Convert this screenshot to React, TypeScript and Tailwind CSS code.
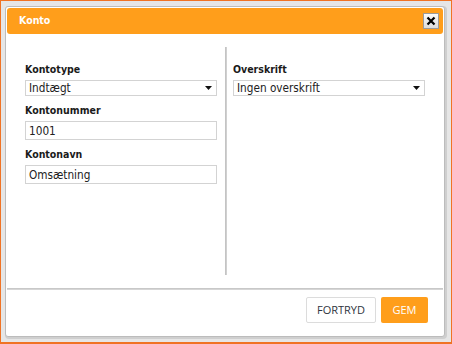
import React from "react";

const font = { fontFamily: '"DejaVu Sans Condensed", "DejaVu Sans", Verdana, sans-serif', fontStretch: "condensed" } as React.CSSProperties;

function Label({ children }: { children: React.ReactNode }) {
  return <div className="h-[12px] leading-[12px] text-[10.5px] font-bold text-[#1a1a1a]">{children}</div>;
}

function Select({ value }: { value: string }) {
  return (
    <div className="mt-[5px] h-[16px] w-[192px] border border-[#d3d3d3] bg-white flex items-center pl-[3px] pr-[4px] text-[11.7px] text-[#222]">
      <span className="flex-1 leading-[14px]">{value}</span>
      <svg width="7" height="4" viewBox="0 0 7 4"><path d="M0 0H7L3.5 4Z" fill="#111" /></svg>
    </div>
  );
}

function Input({ value }: { value: string }) {
  return (
    <div className="mt-[5px] h-[19px] w-[192px] border border-[#d3d3d3] bg-white flex items-center pl-[3px] text-[11.7px] text-[#222]">
      <span className="leading-[14px]">{value}</span>
    </div>
  );
}

export default function App() {
  return (
    <div className="w-[452px] h-[344px] bg-[#e6e6e6] border-[#f07324] border-t border-x border-b-2 pl-[4px] pt-[5px]" style={font}>
      <div className="w-[440px] h-[331px] border border-[#bcbcbc] rounded-[3px] bg-white p-[1px] shadow-[1px_1px_0_1px_#cfcfcf] flex flex-col">
        <div className="h-[26px] rounded-[3px] bg-[#ff9e1b] flex items-center pl-[12px] pr-[4px]">
          <span className="flex-1 text-white font-bold text-[10.5px]">Konto</span>
          <div className="w-[16px] h-[16px] border border-[#9a9a9a] bg-gradient-to-b from-[#fafafa] to-[#dcdcdc] flex items-center justify-center">
            <svg width="10" height="10" viewBox="0 0 10 10"><path d="M1.5 1.5L8.5 8.5M8.5 1.5L1.5 8.5" stroke="#000" strokeWidth="2.2" /></svg>
          </div>
        </div>
        <div className="h-[254px] flex">
          <div className="w-[218px] pt-[29px] pl-[18px]">
            <Label>Kontotype</Label>
            <Select value="Indtægt" />
            <div className="mt-[8px]"><Label>Kontonummer</Label></div>
            <Input value="1001" />
            <div className="mt-[8px]"><Label>Kontonavn</Label></div>
            <Input value="Omsætning" />
          </div>
          <div className="w-[2px] mt-[13px] mb-[13px] bg-[#d0d0d0] border-l border-[#c4c4c4]" />
          <div className="flex-1 pt-[29px] pl-[6px]">
            <Label>Overskrift</Label>
            <Select value="Ingen overskrift" />
          </div>
        </div>
        <div className="h-[2px] bg-[#d6d6d6] border-t border-[#c8c8c8]" />
        <div className="flex justify-end gap-[5px] pt-[7px] pr-[15px]" style={{ fontFamily: '"Open Sans", sans-serif', fontStretch: "normal" }}>
          <div className="w-[70px] h-[26px] border border-[#dcdcdc] rounded-[2px] bg-white flex items-center justify-center text-[11px] text-[#2f3440]">FORTRYD</div>
          <div className="w-[47px] h-[26px] rounded-[2px] bg-[#ff9e1b] flex items-center justify-center text-[11px] text-white">GEM</div>
        </div>
      </div>
    </div>
  );
}
